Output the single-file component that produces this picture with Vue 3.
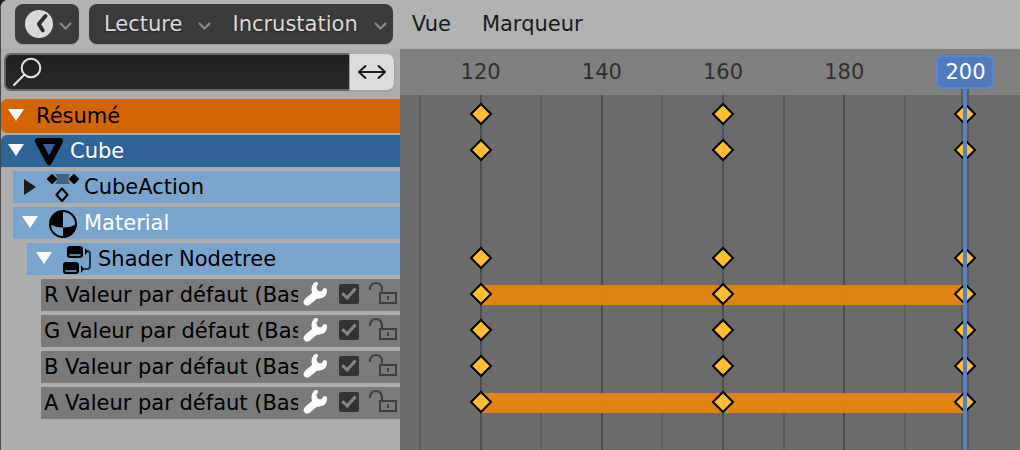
<template>
  <div class="editor">
    <header class="header">
      <button type="button" class="menu-button editor-type" aria-label="Type d'éditeur">
        <svg width="28" height="28" viewBox="0 0 28 28">
          <circle cx="14" cy="14" r="14" fill="#d9d9d9" />
          <path d="M20.500 6L13.800 14L17.800 20.500" fill="none" stroke="#303030" stroke-width="3.800" stroke-linecap="round" stroke-linejoin="round" />
        </svg>
        <svg class="chevron" width="13" height="10" viewBox="0 0 13 10"><path d="M1 2L6.500 7.500L12 2" /></svg>
      </button>

      <div class="menu-group">
        <button v-for="label in popovers" :key="label" type="button" class="menu-button">
          {{ label }}
          <svg class="chevron" width="13" height="10" viewBox="0 0 13 10"><path d="M1 2L6.500 7.500L12 2" /></svg>
        </button>
      </div>

      <nav class="menus">
        <button v-for="label in menus" :key="label" type="button">{{ label }}</button>
      </nav>
    </header>

    <main class="body">
      <aside class="channels">
        <div class="search">
          <label class="search-field">
            <svg width="30" height="30" viewBox="0 0 30 30" fill="none" stroke="#e2e2e2" stroke-width="2">
              <circle cx="19" cy="11" r="9.300" />
              <path d="M12.300 17.700L2 28" stroke-linecap="round" />
            </svg>
            <input v-model="search" type="text" aria-label="Rechercher" />
          </label>
          <button type="button" class="invert" aria-label="Inverser">
            <svg width="28" height="16" viewBox="0 0 28 16" fill="none" stroke="#1a1a1a" stroke-width="2" stroke-linecap="round" stroke-linejoin="round">
              <path d="M1 8H27M7.500 2L1 8L7.500 14M20.500 2L27 8L20.500 14" />
            </svg>
          </button>
        </div>

        <ul class="rows">
          <li v-for="row in rows" :key="row.name" class="row" :class="row.type">
            <template v-if="row.type !== 'curve'">
              <button type="button" class="expander" :aria-label="'Déplier ' + row.name" :aria-expanded="row.open">
                <svg width="16" height="16" viewBox="0 0 16 16">
                  <path v-if="row.open" d="M0 1H16L8 13Z" fill="#fff" />
                  <path v-else d="M2 0V16L14 8Z" fill="#1a1a1a" />
                </svg>
              </button>

              <svg v-if="row.type === 'object'" class="icon" width="32" height="32" viewBox="0 0 32 32">
                <path d="M5 6H27L16 27Z" fill="none" stroke="#000" stroke-width="6" stroke-linejoin="round" />
              </svg>
              <svg v-else-if="row.type === 'action'" class="icon" width="32" height="32" viewBox="0 0 32 32">
                <path d="M8 3H23Q20 8 23 13H8Q12 8 8 3Z" fill="#456280" />
                <path d="M5 4L9 8L5 12L1 8ZM27 4L31 8L27 12L23 8Z" fill="#000" stroke="#000" stroke-width="2" stroke-linejoin="round" />
                <path d="M15 17.500L20.500 23.700L15 30L9.500 23.700Z" fill="none" stroke="#000" stroke-width="2.200" stroke-linejoin="round" />
              </svg>
              <svg v-else-if="row.type === 'material'" class="icon" width="32" height="32" viewBox="0 0 32 32">
                <circle cx="16" cy="17" r="13" fill="none" stroke="#000" stroke-width="2" />
                <path d="M16 4A13 13 0 0 0 3 17Q8 20.500 16 20.500ZM16 20.500V30A13 13 0 0 0 29 17Q24 20.500 16 20.500Z" fill="#000" />
              </svg>
              <svg v-else-if="row.type === 'nodetree'" class="icon" width="32" height="32" viewBox="0 0 32 32">
                <rect x="6" y="3" width="16" height="12" rx="3" />
                <path d="M8.500 12H19.500" stroke="#7ba4cd" stroke-width="1.600" />
                <rect x="2" y="19" width="16" height="12" rx="3" />
                <path d="M4.500 28H15.500" stroke="#7ba4cd" stroke-width="1.600" />
                <path d="M24 8H26Q29 8 29 11V23Q29 26 26 26H21" fill="none" stroke="#1f3246" stroke-width="2" />
                <path d="M24 5V12L27 8.500ZM20 22V30L23 26Z" />
              </svg>
              <span class="name">{{ row.name }}</span>
            </template>

            <template v-else>
              <span class="name">{{ row.name }}</span>
              <button type="button" class="modifiers" :aria-label="'Modificateurs ' + row.name">
                <svg width="26" height="26" viewBox="0 0 26 26">
                  <path d="M11.500 2.500Q14 0 16 2Q16.500 3.500 14.500 5.500Q14.500 9.500 18 10.500Q20 10.500 21.500 7.500Q23.500 6 25 8.500Q25.500 16 18 17.500Q16 17.500 14.500 18L8 23.500Q4.500 26 2 23Q0.500 20.500 3.500 17.500L10 12Q8.500 6.500 11.500 2.500Z" fill="#fff" />
                </svg>
              </button>
              <input v-model="row.enabled" type="checkbox" class="check" :aria-label="'Activer ' + row.name" />
              <button type="button" class="lock" :aria-label="'Verrouiller ' + row.name">
                <svg width="30" height="26" viewBox="0 0 30 26" fill="none" stroke="#404040" stroke-width="2">
                  <path d="M2 9Q2 2 8 2Q14 2 14 9V12" />
                  <path d="M12 12H28V22H12ZM20 15V19" />
                </svg>
              </button>
            </template>
          </li>
        </ul>
      </aside>

      <section class="timeline">
        <i
          v-for="frame in gridFrames"
          :key="frame"
          class="grid-line"
          :class="{ major: frame % 20 === 0 }"
          :style="{ left: frameX(frame) }"
        ></i>

        <div class="ruler">
          <span v-for="frame in labels" :key="frame" class="frame-label" :style="{ left: frameX(frame) }">{{ frame }}</span>
        </div>

        <div class="playhead-shade" :style="{ left: frameX(current) }"></div>

        <div class="tracks">
          <div v-for="row in rows" :key="row.name" class="track">
            <div v-if="row.hold" class="hold" :style="{ left: frameX(120), width: span(120, 200) }"></div>
            <template v-if="row.keyed">
              <svg
                v-for="frame in keyframes"
                :key="frame"
                class="key"
                :style="{ left: frameX(frame) }"
                width="24"
                height="24"
                viewBox="0 0 24 24"
              >
                <path d="M12 2L22 12L12 22L2 12Z" fill="#ffbe32" stroke="#000" stroke-width="2" />
              </svg>
            </template>
          </div>
        </div>

        <div class="playhead" :style="{ left: frameX(current) }"></div>
        <div class="current-frame" :style="{ left: frameX(current) }">{{ current }}</div>
      </section>
    </main>
  </div>
</template>

<script setup>
import { ref } from "vue";

const popovers = ["Lecture", "Incrustation"];
const menus = ["Vue", "Marqueur"];
const search = ref("");

const rows = ref([
  { name: "Résumé", type: "summary", open: true, keyed: true },
  { name: "Cube", type: "object", open: true, keyed: true },
  { name: "CubeAction", type: "action", open: false },
  { name: "Material", type: "material", open: true },
  { name: "Shader Nodetree", type: "nodetree", open: true, keyed: true },
  { name: "R Valeur par défaut (Base Color)", type: "curve", enabled: true, keyed: true, hold: true },
  { name: "G Valeur par défaut (Base Color)", type: "curve", enabled: true, keyed: true },
  { name: "B Valeur par défaut (Base Color)", type: "curve", enabled: true, keyed: true },
  { name: "A Valeur par défaut (Base Color)", type: "curve", enabled: true, keyed: true, hold: true }
]);

const current = ref(200);
const keyframes = [120, 160, 200];
const labels = [120, 140, 160, 180];
const gridFrames = [110, 120, 130, 140, 150, 160, 170, 180, 190, 200];

// visible frame range
const viewStart = 106.7;
const viewLength = 102.3;

const frameX = (frame) => ((frame - viewStart) / viewLength) * 100 + "%";
const span = (from, to) => ((to - from) / viewLength) * 100 + "%";
</script>

<style>
body {
  margin: 0;
  background: #1c1c1c;
}
</style>

<style scoped>
.editor {
  display: flex;
  flex-direction: column;
  box-sizing: border-box;
  min-height: 100vh;
  overflow: hidden;
  border-left: 1px solid #4c4c4c;
  border-top-left-radius: 8px;
  background: #adadad;
  color: #000;
  font-family: "DejaVu Sans", sans-serif;
  font-size: 21px;
}

button {
  padding: 0;
  border: none;
  background: none;
  color: inherit;
  font: inherit;
}

svg {
  display: block;
  flex: none;
}

.header {
  display: flex;
  align-items: center;
  box-sizing: border-box;
  height: 49px;
  padding: 0 14px 1px;
  background: #b2b2b2;
}

.menu-button {
  display: flex;
  align-items: center;
  gap: 16px;
  height: 40px;
  padding: 0 6px 0 15px;
  color: #d9d9d9;
  text-shadow: 0 1px 2px #222;
}

.editor-type {
  gap: 6px;
  margin-right: 10px;
  padding: 0 7px 0 10px;
}

.editor-type,
.menu-group {
  border-radius: 8px;
  background: #3b3b3b;
  box-shadow: 0 1px 0 #9c9c9c;
}

.menu-group {
  display: flex;
}

.chevron {
  margin-top: 4px;
  fill: none;
  stroke: #8c8c8c;
  stroke-width: 2;
}

.menus {
  display: flex;
  gap: 1px;
  margin-left: 4px;
}

.menus button {
  padding: 0 15px;
  color: #1a1a1a;
}

.body {
  display: flex;
  flex: 1;
}

.channels {
  flex: 0 0 399px;
  min-width: 0;
}

.search {
  display: flex;
  align-items: center;
  height: 46px;
  padding: 0 6px 0 3px;
}

.search-field {
  display: flex;
  flex: 1;
  align-items: center;
  box-sizing: border-box;
  height: 38px;
  padding-left: 6px;
  border: 2px solid #666;
  border-right: none;
  border-radius: 7px 0 0 7px;
  background: linear-gradient(#202020, #282828);
}

.search-field input {
  flex: 1;
  min-width: 0;
  padding: 0 6px;
  border: none;
  outline: none;
  background: none;
  color: #e6e6e6;
  font: inherit;
}

.invert {
  display: flex;
  align-items: center;
  justify-content: center;
  width: 44px;
  height: 36px;
  margin-left: 1px;
  border-radius: 0 7px 7px 0;
  background: #dcdcdc;
  box-shadow: 0 1px 0 1px #a0a0a0;
}

.rows {
  display: flex;
  flex-direction: column;
  gap: 4px;
  margin: 0;
  padding: 4px 0 0;
  list-style: none;
}

.row {
  display: flex;
  align-items: center;
  height: 32px;
  padding-left: 9px;
  white-space: nowrap;
}

.summary {
  height: 34px;
  margin-bottom: -2px;
  padding-left: 7px;
  border-radius: 6px 0 0 6px;
  background: #d16500;
}

.object {
  padding-left: 7px;
  border-radius: 6px 0 0 0;
  background: #306398;
  color: #fff;
}

.action,
.material {
  margin-left: 12px;
  background: #7ba4cd;
}

.material {
  color: #fff;
}

.nodetree {
  margin-left: 26px;
  background: #7ba4cd;
}

.curve {
  margin-left: 40px;
  padding-left: 3px;
  background: #7a7a7a;
}

.icon {
  margin-left: 9px;
}

.icon + .name {
  margin-left: 5px;
}

.expander + .name {
  margin-left: 12px;
}

.curve .name {
  flex: 1;
  min-width: 0;
  overflow: hidden;
}

.modifiers {
  margin: 0 11px 2px 4px;
}

.check {
  width: 20px;
  height: 20px;
  margin: 0 9px 2px 0;
  appearance: none;
  border-radius: 2px;
  background: #333;
}

.check:checked::before {
  content: "";
  display: block;
  width: 5px;
  height: 11px;
  margin: 1px 0 0 6px;
  border: solid #858585;
  border-width: 0 3px 3px 0;
  transform: rotate(42deg);
}

.lock {
  margin-bottom: 2px;
  padding-right: 2px;
}

.timeline {
  position: relative;
  flex: 1;
  min-width: 0;
  overflow: hidden;
  background: #6b6b6b;
}

.grid-line {
  position: absolute;
  top: 0;
  bottom: 0;
  width: 2px;
  margin-left: -1px;
  background: #5d5d5d;
}

.grid-line.major {
  background: #4e4e4e;
}

.ruler {
  position: relative;
  height: 46px;
  background: rgba(129, 129, 129, 0.95);
  color: #303030;
  line-height: 46px;
}

.frame-label {
  position: absolute;
  transform: translateX(-50%);
}

.tracks {
  padding-top: 1px;
}

.track {
  position: relative;
  height: 36px;
}

.hold {
  position: absolute;
  top: 9px;
  height: 20px;
  background: rgba(230, 134, 14, 0.95);
}

.key {
  position: absolute;
  top: 6px;
  margin-left: -12px;
}

.playhead,
.playhead-shade {
  position: absolute;
  top: 20px;
  bottom: 0;
  width: 4px;
  margin-left: -2px;
  background: #5680c2;
}

.playhead-shade {
  width: 8px;
  margin-left: -4px;
  background: #5c5c5c;
}

.current-frame {
  position: absolute;
  top: 6px;
  box-sizing: border-box;
  width: 58px;
  height: 34px;
  border: 2px solid #5b86cb;
  border-radius: 7px;
  background: #507abd;
  color: #fff;
  line-height: 30px;
  text-align: center;
  transform: translateX(-50%);
}
</style>
